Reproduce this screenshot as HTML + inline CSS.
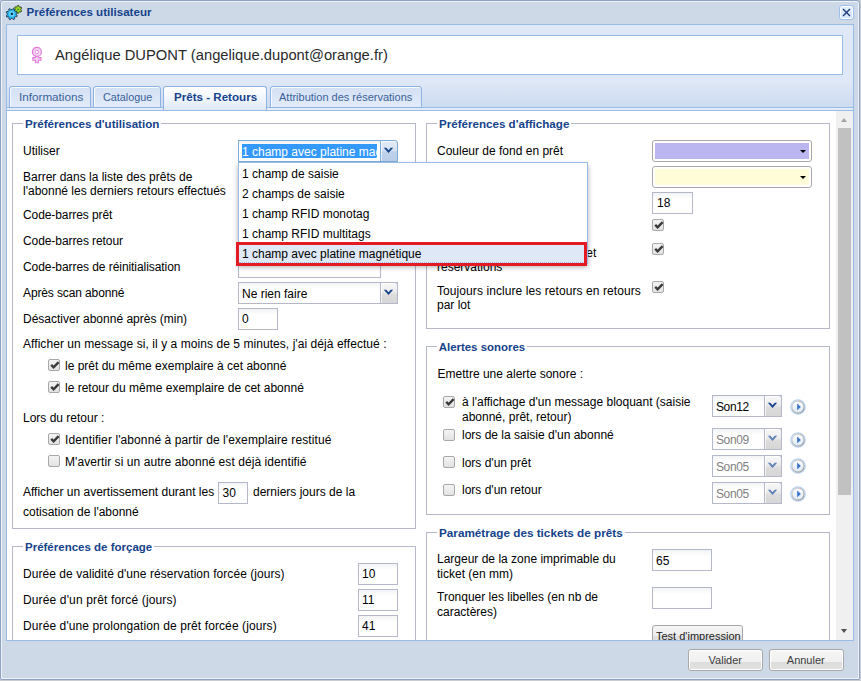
<!DOCTYPE html><html><head><meta charset="utf-8"><style>
*{margin:0;padding:0}
html,body{width:861px;height:681px;overflow:hidden;background:#C9CDD2;font-family:"Liberation Sans",sans-serif;}
.a{position:absolute}
.t{position:absolute;white-space:nowrap;color:#000;font-family:"Liberation Sans",sans-serif;}
.cb{position:absolute;width:12px;height:12px;box-sizing:border-box;border:1px solid #A8A8A8;border-radius:2px;background:linear-gradient(#F4F4F4,#E2E2E2);}
</style></head><body>
<div class="a" style="left:0px;top:0px;width:860px;height:680px;box-sizing:border-box;border:1px solid #8DA3BF;border-radius:3px 3px 2px 2px;background:#CED9E8;box-shadow:inset 1px 1px 0 #EEF3F9,inset -1px -1px 0 #EEF3F9;"></div>
<svg class="a" style="left:5px;top:2.5px" width="18" height="18" viewBox="0 0 18 18">
<path d="M15.84 6.98 L16.61 7.88 L15.92 8.98 L14.78 8.69 L13.92 9.15 L13.53 10.26 L12.23 10.22 L11.90 9.08 L11.08 8.57 L9.92 8.79 L9.30 7.64 L10.13 6.79 L10.16 5.82 L9.39 4.92 L10.08 3.82 L11.22 4.11 L12.08 3.65 L12.47 2.54 L13.77 2.58 L14.10 3.72 L14.92 4.23 L16.08 4.01 L16.70 5.16 L15.87 6.01 Z" fill="#9BDD2C" stroke="#2B3A18" stroke-width="0.9" stroke-linejoin="round"/>
<circle cx="13" cy="6.4" r="0.9" fill="#4C7A12"/>
<path d="M11.08 11.54 L12.23 12.46 L11.72 13.80 L10.24 13.71 L9.49 14.51 L9.65 15.98 L8.34 16.56 L7.36 15.45 L6.26 15.48 L5.34 16.63 L4.00 16.12 L4.09 14.64 L3.29 13.89 L1.82 14.05 L1.24 12.74 L2.35 11.76 L2.32 10.66 L1.17 9.74 L1.68 8.40 L3.16 8.49 L3.91 7.69 L3.75 6.22 L5.06 5.64 L6.04 6.75 L7.14 6.72 L8.06 5.57 L9.40 6.08 L9.31 7.56 L10.11 8.31 L11.58 8.15 L12.16 9.46 L11.05 10.44 Z" fill="#27B6EE" stroke="#1B2F45" stroke-width="0.9" stroke-linejoin="round"/>
<circle cx="6.9" cy="10.9" r="2.3" fill="none" stroke="#8FE0FF" stroke-width="0.9"/>
<circle cx="6.9" cy="10.9" r="1.1" fill="#1B2F45"/>
</svg>
<div class="t" style="left:26.5px;top:4.52px;font-size:11.5px;line-height:13px;font-weight:bold;color:#15428B;font-size:11.6px">Préférences utilisateur</div>
<div class="a" style="left:839px;top:5px;width:15px;height:15px;box-sizing:border-box;border:1px solid #9FC0EC;border-radius:3px;background:linear-gradient(#E2F0FE,#D2E6FC);box-shadow:inset 0 0 0 1px #fff"><svg width="13" height="13" style="position:absolute;left:0;top:0"><path d="M3 3 L10 10 M10 3 L3 10" stroke="#1F3679" stroke-width="1.4"/></svg></div>
<div class="a" style="left:6px;top:24px;width:848px;height:617px;box-sizing:border-box;border:1px solid #99BBE8;background:linear-gradient(#DFE8F6 0,#DFE8F6 56px,#CCDBF0 83px);"></div>
<div class="a" style="left:17px;top:35px;width:826px;height:40px;box-sizing:border-box;border:1px solid #99BBE8;background:#fff;"></div>
<svg class="a" style="left:30px;top:45px" width="14" height="19" viewBox="0 0 14 19">
<path d="M5.4 11.3 H8.4 V12.6 H11 V15.3 H8.4 V17.7 H5.4 V15.3 H2.8 V12.6 H5.4 Z" fill="#F6D6F3" stroke="#E07AD9" stroke-width="1.1"/>
<circle cx="6.9" cy="6.9" r="4.5" fill="#F6D6F3" stroke="#E07AD9" stroke-width="1.2"/>
<circle cx="6.9" cy="6.9" r="1.7" fill="#fff" stroke="#E58DDF" stroke-width="1"/>
</svg>
<div class="t" style="left:55px;top:47.10px;font-size:15px;line-height:17px;color:#2a2a2a;font-size:14.76px">Angélique DUPONT (angelique.dupont@orange.fr)</div>
<div class="a" style="left:7px;top:107px;width:846px;height:1px;background:#99BBE8;"></div>
<div class="a" style="left:7px;top:108px;width:846px;height:2px;background:#E3ECF9;"></div>
<div class="a" style="left:7px;top:110px;width:846px;height:1px;background:#99BBE8;"></div>
<div class="a" style="left:9px;top:86px;width:82px;height:22px;box-sizing:border-box;border:1px solid #8DB2E3;border-radius:3px 3px 0 0;background:linear-gradient(#D3E1F4,#E2EBF8);box-shadow:inset 1px 1px 0 #F7FAFE"></div>
<div class="t" style="left:19px;top:90.69px;font-size:11px;line-height:13px;color:#38619A;font-size:11.7px;margin-top:-1px;">Informations</div>
<div class="a" style="left:93px;top:86px;width:68px;height:22px;box-sizing:border-box;border:1px solid #8DB2E3;border-radius:3px 3px 0 0;background:linear-gradient(#D3E1F4,#E2EBF8);box-shadow:inset 1px 1px 0 #F7FAFE"></div>
<div class="t" style="left:103px;top:90.69px;font-size:11px;line-height:13px;color:#38619A;font-size:10.8px;">Catalogue</div>
<div class="a" style="left:270px;top:86px;width:152px;height:22px;box-sizing:border-box;border:1px solid #8DB2E3;border-radius:3px 3px 0 0;background:linear-gradient(#D3E1F4,#E2EBF8);box-shadow:inset 1px 1px 0 #F7FAFE"></div>
<div class="t" style="left:279px;top:90.69px;font-size:11px;line-height:13px;color:#38619A;font-size:11px;">Attribution des réservations</div>
<div class="a" style="left:163px;top:86px;width:104px;height:24px;box-sizing:border-box;border:1px solid #8DB2E3;border-bottom:none;border-radius:3px 3px 0 0;background:linear-gradient(#fff,#EDF3FC 60%,#DEE8F6)"></div>
<div class="t" style="left:174px;top:89.52px;font-size:11.5px;line-height:13px;font-weight:bold;color:#15428B;font-size:11.6px">Prêts - Retours</div>
<div class="a" style="left:7px;top:111px;width:846px;height:529px;background:#fff;"></div>
<div class="a" style="left:12px;top:123px;width:404px;height:406px;box-sizing:border-box;border:1px solid #B5B8C8;"></div>
<div class="t" style="left:25px;top:117.22px;font-size:11.5px;line-height:13px;font-weight:bold;color:#15428B;background:#fff;padding:0 2px;margin-left:-2px;font-size:11.62px;">Préférences d'utilisation</div>
<div class="t" style="left:23px;top:143.84px;font-size:12px;line-height:14px;">Utiliser</div>
<div class="t" style="left:23px;top:170.24px;font-size:12px;line-height:14px;">Barrer dans la liste des prêts de</div>
<div class="t" style="left:23px;top:183.84px;font-size:12px;line-height:14px;">l'abonné les derniers retours effectués</div>
<div class="t" style="left:23px;top:207.84px;font-size:12px;line-height:14px;letter-spacing:-0.09px">Code-barres prêt</div>
<div class="t" style="left:23px;top:233.84px;font-size:12px;line-height:14px;letter-spacing:-0.08px">Code-barres retour</div>
<div class="t" style="left:23px;top:259.84px;font-size:12px;line-height:14px;letter-spacing:-0.065px">Code-barres de réinitialisation</div>
<div class="a" style="left:238px;top:256px;width:143px;height:22px;box-sizing:border-box;border:1px solid #B5B8C8;background:linear-gradient(#F2F3F5,#fff 6px,#fff);"></div>
<div class="t" style="left:23px;top:285.84px;font-size:12px;line-height:14px;letter-spacing:-0.12px">Après scan abonné</div>
<div class="a" style="left:238px;top:282px;width:160px;height:22px;box-sizing:border-box;border:1px solid #B5B8C8;background:linear-gradient(#F2F3F5,#fff 6px,#fff);"></div>
<div class="t" style="left:242px;top:286.84px;font-size:12px;line-height:14px;">Ne rien faire</div>
<div class="a" style="left:380px;top:282px;width:18px;height:22px;box-sizing:border-box;border:1px solid #B5B8C8;border-left-color:#B5B8C8;background:linear-gradient(#F8F8F8,#EEEEEE 40%,#DCDCDC 60%,#D6D6D6);border-radius:0 3px 0 0;box-shadow:inset 1px 1px 0 rgba(255,255,255,0.7)"><svg width="17" height="22" style="position:absolute;left:-1px;top:-1px"><path d="M3.8 7.8 L6.3 7.8 L8.5 10.2 L10.7 7.8 L13.2 7.8 L8.5 13 Z" fill="#15428B"/></svg></div>
<div class="t" style="left:23px;top:311.84px;font-size:12px;line-height:14px;">Désactiver abonné après (min)</div>
<div class="a" style="left:238px;top:308px;width:40px;height:22px;box-sizing:border-box;border:1px solid #B5B8C8;background:linear-gradient(#F2F3F5,#fff 6px,#fff);"></div>
<div class="t" style="left:242px;top:311.84px;font-size:12px;line-height:14px;">0</div>
<div class="t" style="left:23px;top:336.84px;font-size:12px;line-height:14px;letter-spacing:0.06px">Afficher un message si, il y a moins de 5 minutes, j'ai déjà effectué :</div>
<div class="cb" style="left:48px;top:359px"><svg width="12" height="12" viewBox="0 0 12 12" style="position:absolute;left:0;top:0"><path d="M2.2 4.9 L4.6 7.3 L9.6 2.2" stroke="#3a3a3a" stroke-width="2.4" fill="none" stroke-linecap="butt" stroke-linejoin="miter"/></svg></div>
<div class="t" style="left:65px;top:358.84px;font-size:12px;line-height:14px;">le prêt du même exemplaire à cet abonné</div>
<div class="cb" style="left:48px;top:381px"><svg width="12" height="12" viewBox="0 0 12 12" style="position:absolute;left:0;top:0"><path d="M2.2 4.9 L4.6 7.3 L9.6 2.2" stroke="#3a3a3a" stroke-width="2.4" fill="none" stroke-linecap="butt" stroke-linejoin="miter"/></svg></div>
<div class="t" style="left:65px;top:380.84px;font-size:12px;line-height:14px;">le retour du même exemplaire de cet abonné</div>
<div class="t" style="left:23px;top:410.84px;font-size:12px;line-height:14px;">Lors du retour :</div>
<div class="cb" style="left:48px;top:433px"><svg width="12" height="12" viewBox="0 0 12 12" style="position:absolute;left:0;top:0"><path d="M2.2 4.9 L4.6 7.3 L9.6 2.2" stroke="#3a3a3a" stroke-width="2.4" fill="none" stroke-linecap="butt" stroke-linejoin="miter"/></svg></div>
<div class="t" style="left:65px;top:432.84px;font-size:12px;line-height:14px;letter-spacing:0.095px">Identifier l'abonné à partir de l'exemplaire restitué</div>
<div class="cb" style="left:48px;top:455px"></div>
<div class="t" style="left:65px;top:454.84px;font-size:12px;line-height:14px;letter-spacing:0.065px">M'avertir si un autre abonné est déjà identifié</div>
<div class="t" style="left:23px;top:484.84px;font-size:12px;line-height:14px;">Afficher un avertissement durant les</div>
<div class="a" style="left:218px;top:482px;width:30px;height:22px;box-sizing:border-box;border:1px solid #B5B8C8;background:linear-gradient(#F2F3F5,#fff 6px,#fff);"></div>
<div class="t" style="left:222.5px;top:485.84px;font-size:12px;line-height:14px;">30</div>
<div class="t" style="left:253px;top:484.84px;font-size:12px;line-height:14px;">derniers jours de la</div>
<div class="t" style="left:23px;top:504.84px;font-size:12px;line-height:14px;">cotisation de l'abonné</div>
<div class="a" style="left:12px;top:546px;width:404px;height:94px;box-sizing:border-box;border:1px solid #B5B8C8;border-bottom:none;"></div>
<div class="t" style="left:25px;top:541.02px;font-size:11.5px;line-height:13px;font-weight:bold;color:#15428B;background:#fff;padding:0 2px;margin-left:-2px;font-size:11.5px;">Préférences de forçage</div>
<div class="t" style="left:23px;top:566.84px;font-size:12px;line-height:14px;letter-spacing:0.05px">Durée de validité d'une réservation forcée (jours)</div>
<div class="a" style="left:358px;top:563px;width:40px;height:22px;box-sizing:border-box;border:1px solid #B5B8C8;background:linear-gradient(#F2F3F5,#fff 6px,#fff);"></div>
<div class="t" style="left:362px;top:567.34px;font-size:12px;line-height:14px;">10</div>
<div class="t" style="left:23px;top:592.84px;font-size:12px;line-height:14px;letter-spacing:0.14px">Durée d'un prêt forcé (jours)</div>
<div class="a" style="left:358px;top:589px;width:40px;height:22px;box-sizing:border-box;border:1px solid #B5B8C8;background:linear-gradient(#F2F3F5,#fff 6px,#fff);"></div>
<div class="t" style="left:362px;top:593.34px;font-size:12px;line-height:14px;">11</div>
<div class="t" style="left:23px;top:618.84px;font-size:12px;line-height:14px;letter-spacing:0.1px">Durée d'une prolongation de prêt forcée (jours)</div>
<div class="a" style="left:358px;top:615px;width:40px;height:22px;box-sizing:border-box;border:1px solid #B5B8C8;background:linear-gradient(#F2F3F5,#fff 6px,#fff);"></div>
<div class="t" style="left:362px;top:619.34px;font-size:12px;line-height:14px;">41</div>
<div class="a" style="left:426px;top:123px;width:404px;height:206px;box-sizing:border-box;border:1px solid #B5B8C8;"></div>
<div class="t" style="left:439px;top:117.22px;font-size:11.5px;line-height:13px;font-weight:bold;color:#15428B;background:#fff;padding:0 2px;margin-left:-2px;font-size:11.6px;">Préférences d'affichage</div>
<div class="t" style="left:437px;top:144.44px;font-size:12px;line-height:14px;">Couleur de fond en prêt</div>
<div class="a" style="left:652px;top:140px;width:160px;height:22px;box-sizing:border-box;border:1px solid #A9A9A9;border-radius:3px;background:#fff;padding:2px"><div style="width:100%;height:100%;background:#BBB5F0;position:relative"><div style="position:absolute;right:3px;top:7px;width:0;height:0;border-left:3px solid transparent;border-right:3px solid transparent;border-top:3.5px solid #000"></div></div></div>
<div class="t" style="left:437px;top:169.84px;font-size:12px;line-height:14px;">Couleur de fond en retour</div>
<div class="a" style="left:652px;top:166px;width:160px;height:22px;box-sizing:border-box;border:1px solid #A9A9A9;border-radius:3px;background:#fff;padding:2px"><div style="width:100%;height:100%;background:#FFFDD8;position:relative"><div style="position:absolute;right:3px;top:7px;width:0;height:0;border-left:3px solid transparent;border-right:3px solid transparent;border-top:3.5px solid #000"></div></div></div>
<div class="t" style="left:437px;top:195.84px;font-size:12px;line-height:14px;">Taille de la police</div>
<div class="a" style="left:652px;top:192px;width:41px;height:22px;box-sizing:border-box;border:1px solid #B5B8C8;background:linear-gradient(#F2F3F5,#fff 6px,#fff);"></div>
<div class="t" style="left:657px;top:196.34px;font-size:12px;line-height:14px;">18</div>
<div class="t" style="left:437px;top:219.84px;font-size:12px;line-height:14px;">Afficher le code-barres</div>
<div class="cb" style="left:652px;top:219px"><svg width="12" height="12" viewBox="0 0 12 12" style="position:absolute;left:0;top:0"><path d="M2.2 4.9 L4.6 7.3 L9.6 2.2" stroke="#3a3a3a" stroke-width="2.4" fill="none" stroke-linecap="butt" stroke-linejoin="miter"/></svg></div>
<div class="t" style="left:437px;top:245.34px;font-size:12px;line-height:14px;">Afficher les prêts, retours en</div>
<div class="t" style="left:586.3px;top:246.34px;font-size:12px;line-height:14px;">et</div>
<div class="t" style="left:437px;top:259.64px;font-size:12px;line-height:14px;">réservations</div>
<div class="cb" style="left:652px;top:243px"><svg width="12" height="12" viewBox="0 0 12 12" style="position:absolute;left:0;top:0"><path d="M2.2 4.9 L4.6 7.3 L9.6 2.2" stroke="#3a3a3a" stroke-width="2.4" fill="none" stroke-linecap="butt" stroke-linejoin="miter"/></svg></div>
<div class="t" style="left:437px;top:284.44px;font-size:12px;line-height:14px;letter-spacing:0.08px">Toujours inclure les retours en retours</div>
<div class="t" style="left:437px;top:297.54px;font-size:12px;line-height:14px;">par lot</div>
<div class="cb" style="left:652px;top:281px"><svg width="12" height="12" viewBox="0 0 12 12" style="position:absolute;left:0;top:0"><path d="M2.2 4.9 L4.6 7.3 L9.6 2.2" stroke="#3a3a3a" stroke-width="2.4" fill="none" stroke-linecap="butt" stroke-linejoin="miter"/></svg></div>
<div class="a" style="left:426px;top:346px;width:404px;height:169px;box-sizing:border-box;border:1px solid #B5B8C8;"></div>
<div class="t" style="left:438.7px;top:340.82px;font-size:11.5px;line-height:13px;font-weight:bold;color:#15428B;background:#fff;padding:0 2px;margin-left:-2px;font-size:11.45px;">Alertes sonores</div>
<div class="t" style="left:437.6px;top:367.44px;font-size:12px;line-height:14px;">Emettre une alerte sonore :</div>
<svg width="0" height="0" style="position:absolute"><defs><linearGradient id="pg" x1="0" y1="0" x2="0" y2="1"><stop offset="0" stop-color="#fff"/><stop offset="1" stop-color="#DCE8F7"/></linearGradient><linearGradient id="pr" x1="0" y1="0" x2="1" y2="1"><stop offset="0" stop-color="#D8D8D8"/><stop offset="1" stop-color="#8E8E8E"/></linearGradient></defs></svg>
<div class="cb" style="left:443px;top:396px"><svg width="12" height="12" viewBox="0 0 12 12" style="position:absolute;left:0;top:0"><path d="M2.2 4.9 L4.6 7.3 L9.6 2.2" stroke="#3a3a3a" stroke-width="2.4" fill="none" stroke-linecap="butt" stroke-linejoin="miter"/></svg></div>
<div class="t" style="left:462px;top:395.34px;font-size:12px;line-height:14px;">à l'affichage d'un message bloquant (saisie</div>
<div class="t" style="left:462px;top:410.04px;font-size:12px;line-height:14px;">abonné, prêt, retour)</div>
<div class="a" style="left:712px;top:395px;width:70px;height:22px;box-sizing:border-box;border:1px solid #B5B8C8;background:linear-gradient(#F2F3F5,#fff 6px,#fff);"></div>
<div class="t" style="left:716px;top:399.54px;font-size:12px;line-height:14px;letter-spacing:-0.4px">Son12</div>
<div class="a" style="left:764px;top:395px;width:18px;height:22px;box-sizing:border-box;border:1px solid #B5B8C8;border-left-color:#B5B8C8;background:linear-gradient(#F8F8F8,#EEEEEE 40%,#DCDCDC 60%,#D6D6D6);border-radius:0 3px 0 0;box-shadow:inset 1px 1px 0 rgba(255,255,255,0.7)"><svg width="17" height="22" style="position:absolute;left:-1px;top:-1px"><path d="M3.8 7.8 L6.3 7.8 L8.5 10.2 L10.7 7.8 L13.2 7.8 L8.5 13 Z" fill="#15428B"/></svg></div>
<svg class="a" style="left:789.6px;top:398.7px" width="16" height="16" viewBox="0 0 16 16"><circle cx="8" cy="8" r="7.2" fill="none" stroke="#BBD6F8" stroke-width="1.3"/><circle cx="8" cy="8" r="6.1" fill="url(#pg)" stroke="url(#pr)" stroke-width="1.1"/><path d="M7.2 4.6 L10.9 8 L7.2 11.3 Z" fill="#3A72C4"/></svg>
<div class="cb" style="left:443px;top:429px"></div>
<div class="t" style="left:462px;top:428.44px;font-size:12px;line-height:14px;">lors de la saisie d'un abonné</div>
<div class="a" style="left:712px;top:428px;width:70px;height:22px;box-sizing:border-box;border:1px solid #B5B8C8;background:linear-gradient(#F2F3F5,#fff 6px,#fff);"></div>
<div class="t" style="left:716px;top:432.54px;font-size:12px;line-height:14px;color:#808080;letter-spacing:-0.4px">Son09</div>
<div class="a" style="left:764px;top:428px;width:18px;height:22px;box-sizing:border-box;border:1px solid #B5B8C8;border-left-color:#B5B8C8;background:linear-gradient(#F8F8F8,#EEEEEE 40%,#DCDCDC 60%,#D6D6D6);border-radius:0 3px 0 0;box-shadow:inset 1px 1px 0 rgba(255,255,255,0.7)"><svg width="17" height="22" style="position:absolute;left:-1px;top:-1px"><path d="M3.8 7.8 L6.3 7.8 L8.5 10.2 L10.7 7.8 L13.2 7.8 L8.5 13 Z" fill="#5F7FB8"/></svg></div>
<svg class="a" style="left:789.6px;top:431.5px" width="16" height="16" viewBox="0 0 16 16"><circle cx="8" cy="8" r="7.2" fill="none" stroke="#BBD6F8" stroke-width="1.3"/><circle cx="8" cy="8" r="6.1" fill="url(#pg)" stroke="url(#pr)" stroke-width="1.1"/><path d="M7.2 4.6 L10.9 8 L7.2 11.3 Z" fill="#3A72C4"/></svg>
<div class="cb" style="left:443px;top:456px"></div>
<div class="t" style="left:462px;top:455.74px;font-size:12px;line-height:14px;">lors d'un prêt</div>
<div class="a" style="left:712px;top:455px;width:70px;height:22px;box-sizing:border-box;border:1px solid #B5B8C8;background:linear-gradient(#F2F3F5,#fff 6px,#fff);"></div>
<div class="t" style="left:716px;top:459.54px;font-size:12px;line-height:14px;color:#808080;letter-spacing:-0.4px">Son05</div>
<div class="a" style="left:764px;top:455px;width:18px;height:22px;box-sizing:border-box;border:1px solid #B5B8C8;border-left-color:#B5B8C8;background:linear-gradient(#F8F8F8,#EEEEEE 40%,#DCDCDC 60%,#D6D6D6);border-radius:0 3px 0 0;box-shadow:inset 1px 1px 0 rgba(255,255,255,0.7)"><svg width="17" height="22" style="position:absolute;left:-1px;top:-1px"><path d="M3.8 7.8 L6.3 7.8 L8.5 10.2 L10.7 7.8 L13.2 7.8 L8.5 13 Z" fill="#5F7FB8"/></svg></div>
<svg class="a" style="left:789.6px;top:458.3px" width="16" height="16" viewBox="0 0 16 16"><circle cx="8" cy="8" r="7.2" fill="none" stroke="#BBD6F8" stroke-width="1.3"/><circle cx="8" cy="8" r="6.1" fill="url(#pg)" stroke="url(#pr)" stroke-width="1.1"/><path d="M7.2 4.6 L10.9 8 L7.2 11.3 Z" fill="#3A72C4"/></svg>
<div class="cb" style="left:443px;top:484px"></div>
<div class="t" style="left:462px;top:482.64px;font-size:12px;line-height:14px;">lors d'un retour</div>
<div class="a" style="left:712px;top:482px;width:70px;height:22px;box-sizing:border-box;border:1px solid #B5B8C8;background:linear-gradient(#F2F3F5,#fff 6px,#fff);"></div>
<div class="t" style="left:716px;top:486.54px;font-size:12px;line-height:14px;color:#808080;letter-spacing:-0.4px">Son05</div>
<div class="a" style="left:764px;top:482px;width:18px;height:22px;box-sizing:border-box;border:1px solid #B5B8C8;border-left-color:#B5B8C8;background:linear-gradient(#F8F8F8,#EEEEEE 40%,#DCDCDC 60%,#D6D6D6);border-radius:0 3px 0 0;box-shadow:inset 1px 1px 0 rgba(255,255,255,0.7)"><svg width="17" height="22" style="position:absolute;left:-1px;top:-1px"><path d="M3.8 7.8 L6.3 7.8 L8.5 10.2 L10.7 7.8 L13.2 7.8 L8.5 13 Z" fill="#5F7FB8"/></svg></div>
<svg class="a" style="left:789.6px;top:485.6px" width="16" height="16" viewBox="0 0 16 16"><circle cx="8" cy="8" r="7.2" fill="none" stroke="#BBD6F8" stroke-width="1.3"/><circle cx="8" cy="8" r="6.1" fill="url(#pg)" stroke="url(#pr)" stroke-width="1.1"/><path d="M7.2 4.6 L10.9 8 L7.2 11.3 Z" fill="#3A72C4"/></svg>
<div class="a" style="left:426px;top:532px;width:404px;height:108px;box-sizing:border-box;border:1px solid #B5B8C8;border-bottom:none;"></div>
<div class="t" style="left:439px;top:525.92px;font-size:11.5px;line-height:13px;font-weight:bold;color:#15428B;background:#fff;padding:0 2px;margin-left:-2px;font-size:11.72px;">Paramétrage des tickets de prêts</div>
<div class="t" style="left:437px;top:552.24px;font-size:12px;line-height:14px;">Largeur de la zone imprimable du</div>
<div class="t" style="left:437px;top:567.14px;font-size:12px;line-height:14px;">ticket (en mm)</div>
<div class="a" style="left:652px;top:549px;width:60px;height:22px;box-sizing:border-box;border:1px solid #B5B8C8;background:linear-gradient(#F2F3F5,#fff 6px,#fff);"></div>
<div class="t" style="left:656px;top:553.54px;font-size:12px;line-height:14px;">65</div>
<div class="t" style="left:437px;top:590.44px;font-size:12px;line-height:14px;">Tronquer les libelles (en nb de</div>
<div class="t" style="left:437px;top:604.94px;font-size:12px;line-height:14px;">caractères)</div>
<div class="a" style="left:652px;top:587px;width:60px;height:22px;box-sizing:border-box;border:1px solid #B5B8C8;background:linear-gradient(#F2F3F5,#fff 6px,#fff);"></div>
<div class="a" style="left:652px;top:625px;width:91px;height:22px;box-sizing:border-box;border:1px solid #A6A6A6;border-radius:3px;background:linear-gradient(#F6F6F6,#EDEDED 50%,#DEDEDE 50%,#E3E3E3)"></div>
<div class="t" style="left:656px;top:630.19px;font-size:11px;line-height:13px;color:#222;">Test d'impression</div>
<div class="a" style="left:7px;top:640px;width:846px;height:38px;background:#CED9E8;"></div>
<div class="a" style="left:6px;top:640px;width:848px;height:1px;background:#99BBE8;"></div>
<div class="a" style="left:836px;top:111px;width:17px;height:529px;background:#F0F0F0;"></div>
<div class="a" style="left:838px;top:128px;width:13px;height:367px;background:#C1C1C1;"></div>
<div class="a" style="left:841px;top:118px;width:0;height:0;border-left:3.5px solid transparent;border-right:3.5px solid transparent;border-bottom:4px solid #A3A3A3"></div>
<div class="a" style="left:841px;top:629px;width:0;height:0;border-left:3.5px solid transparent;border-right:3.5px solid transparent;border-top:4px solid #505050"></div>
<div class="a" style="left:238px;top:140px;width:143px;height:22px;box-sizing:border-box;border:1px solid #B5B8C8;background:linear-gradient(#F2F3F5,#fff 6px,#fff);"></div>
<div class="a" style="left:238px;top:140px;width:143px;height:22px;box-sizing:border-box;border:1px solid #7EADD9;border-right:none"></div>
<div class="a" style="left:242px;top:144px;width:135px;height:14px;background:#3399FF;"></div>
<div class="a" style="left:242px;top:143px;width:135px;height:16px;overflow:hidden"><div class="t" style="left:0;top:1.5px;font-size:12px;line-height:14px;color:#fff">1 champ avec platine magnétique</div></div>
<div class="a" style="left:380px;top:140px;width:18px;height:22px;box-sizing:border-box;border:1px solid #7EADD9;border-left-color:#7EADD9;background:linear-gradient(#E2EAF6,#D7E3F3 46%,#C0D2EA 54%,#BACEE9);border-radius:0 3px 0 0;box-shadow:inset 1px 1px 0 rgba(255,255,255,0.7)"><svg width="17" height="22" style="position:absolute;left:-1px;top:-1px"><path d="M3.8 7.8 L6.3 7.8 L8.5 10.2 L10.7 7.8 L13.2 7.8 L8.5 13 Z" fill="#15428B"/></svg></div>
<div class="a" style="left:238px;top:162px;width:350px;height:102px;box-sizing:border-box;border:1px solid #99BBE8;background:#fff;box-shadow:0 3px 5px rgba(0,0,0,0.32)"></div>
<div class="t" style="left:242px;top:166.54px;font-size:12px;line-height:14px;">1 champ de saisie</div>
<div class="t" style="left:242px;top:186.54px;font-size:12px;line-height:14px;">2 champs de saisie</div>
<div class="t" style="left:242px;top:206.54px;font-size:12px;line-height:14px;">1 champ RFID monotag</div>
<div class="t" style="left:242px;top:226.54px;font-size:12px;line-height:14px;">1 champ RFID multitags</div>
<div class="a" style="left:239px;top:245px;width:346px;height:18px;background:#DFE8F6;border-bottom:1px dotted #99BBE8;box-sizing:border-box"></div>
<div class="t" style="left:242px;top:246.54px;font-size:12px;line-height:14px;">1 champ avec platine magnétique</div>
<div class="a" style="left:236px;top:242px;width:351px;height:24px;box-sizing:border-box;border:3px solid #E41B23"></div>
<div class="a" style="left:688px;top:649px;width:75px;height:22px;box-sizing:border-box;border:1px solid #A8A8A8;border-radius:3px;background:linear-gradient(#F6F6F6,#F0F0F0 58%,#DCDCDC 58%,#E0E0E0);box-shadow:inset 0 0 0 1px #fff"></div>
<div class="t" style="left:708.6px;top:654.49px;font-size:11px;line-height:13px;color:#3a3a3a;">Valider</div>
<div class="a" style="left:769px;top:649px;width:75px;height:22px;box-sizing:border-box;border:1px solid #A8A8A8;border-radius:3px;background:linear-gradient(#F6F6F6,#F0F0F0 58%,#DCDCDC 58%,#E0E0E0);box-shadow:inset 0 0 0 1px #fff"></div>
<div class="t" style="left:786.8000000000001px;top:654.49px;font-size:11px;line-height:13px;color:#3a3a3a;">Annuler</div>
</body></html>
